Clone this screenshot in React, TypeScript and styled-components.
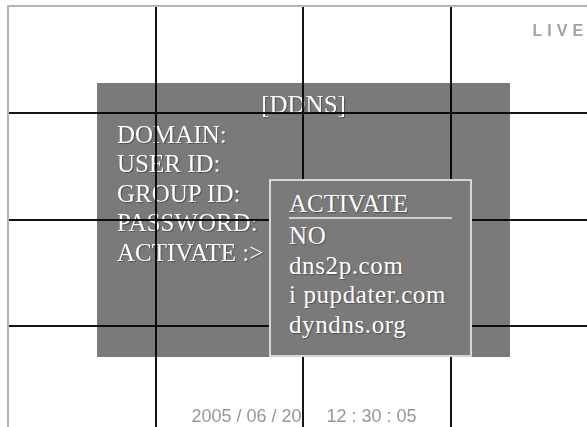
import React from 'react';
import styled, { createGlobalStyle } from 'styled-components';

const GlobalStyle = createGlobalStyle`
  html, body {
    margin: 0;
    padding: 0;
    background: #ffffff;
    overflow: hidden;
  }
  body {
    width: 587px;
    height: 427px;
  }
`;

const labels = ['DOMAIN:', 'USER ID:', 'GROUP ID:', 'PASSWORD:', 'ACTIVATE :>'];
const providers = ['NO', 'dns2p.com', 'i pupdater.com', 'dyndns.org'];

const App: React.FC = () => {
  return (
    <>
      <GlobalStyle />
      <Screen>
        <CameraGrid>
          {Array.from({ length: 16 }).map((_, i) => (
            <Cell key={i}>{i === 3 && <LiveTag>LIVE</LiveTag>}</Cell>
          ))}
        </CameraGrid>

        <DdnsPanel>
          <PanelTitle>[DDNS]</PanelTitle>
          {labels.map((label) => (
            <PanelLabel key={label}>{label}</PanelLabel>
          ))}
        </DdnsPanel>

        <ActivateMenu>
          <MenuHeader>ACTIVATE</MenuHeader>
          {providers.map((p) => (
            <MenuItem key={p}>{p}</MenuItem>
          ))}
        </ActivateMenu>

        <Timestamp>
          <span>2005 / 06 / 20</span>
          <span>12 : 30 : 05</span>
        </Timestamp>
      </Screen>
    </>
  );
};

export default App;

const Screen = styled.div`
  position: relative;
  isolation: isolate;
  margin: 5px 0 0 7px;
  width: 590px;
  height: 422px;
  overflow: hidden;
  border-top: 2px solid #b4b4b4;
  border-left: 2px solid #b4b4b4;
`;

const CameraGrid = styled.div`
  display: grid;
  grid-template-columns: repeat(4, 147.5px);
  grid-template-rows: repeat(4, 106.8px);
`;

const Cell = styled.div`
  box-sizing: border-box;
  border-right: 2px solid #161616;
  border-bottom: 2px solid #161616;
`;

const LiveTag = styled.div`
  padding: 16px 0 0 81px;
  font-family: 'Liberation Sans', Arial, sans-serif;
  font-size: 16px;
  line-height: 16px;
  font-weight: 700;
  letter-spacing: 5px;
  color: #a2a2a2;
`;

const serif = `'Liberation Serif', 'Times New Roman', serif`;

const DdnsPanel = styled.div`
  position: absolute;
  left: 88px;
  top: 76px;
  width: 413px;
  height: 274px;
  box-sizing: border-box;
  padding: 7px 0 0 20px;
  background: #7a7a7a;
  mix-blend-mode: multiply;
  font-family: ${serif};
  font-size: 25px;
  line-height: 29.5px;
  color: #ffffff;
  text-shadow: 1px 1px 1px rgba(0, 0, 0, 0.35);
`;

const PanelTitle = styled.div`
  text-align: center;
  margin-left: -20px;
`;

const PanelLabel = styled.div`
  white-space: nowrap;
`;

const ActivateMenu = styled.div`
  position: absolute;
  left: 260px;
  top: 172px;
  width: 203px;
  height: 178px;
  box-sizing: border-box;
  display: flex;
  flex-direction: column;
  padding: 9px 18px 0 18px;
  background: #7a7a7a;
  border: 2px solid #d6d6d6;
  font-family: ${serif};
  font-size: 25px;
  color: #ffffff;
  text-shadow: 1px 1px 1px rgba(0, 0, 0, 0.35);
`;

const MenuHeader = styled.div`
  line-height: 27px;
  border-bottom: 2px solid #cfcfcf;
  margin-bottom: 2px;
`;

const MenuItem = styled.div`
  line-height: 29.5px;
  letter-spacing: 0.6px;
  white-space: nowrap;
`;

const Timestamp = styled.div`
  position: absolute;
  left: 0;
  right: 0;
  bottom: 4px;
  display: flex;
  justify-content: center;
  gap: 25px;
  font-family: 'Liberation Sans', Arial, sans-serif;
  font-size: 18px;
  line-height: 18px;
  color: #979797;
`;
